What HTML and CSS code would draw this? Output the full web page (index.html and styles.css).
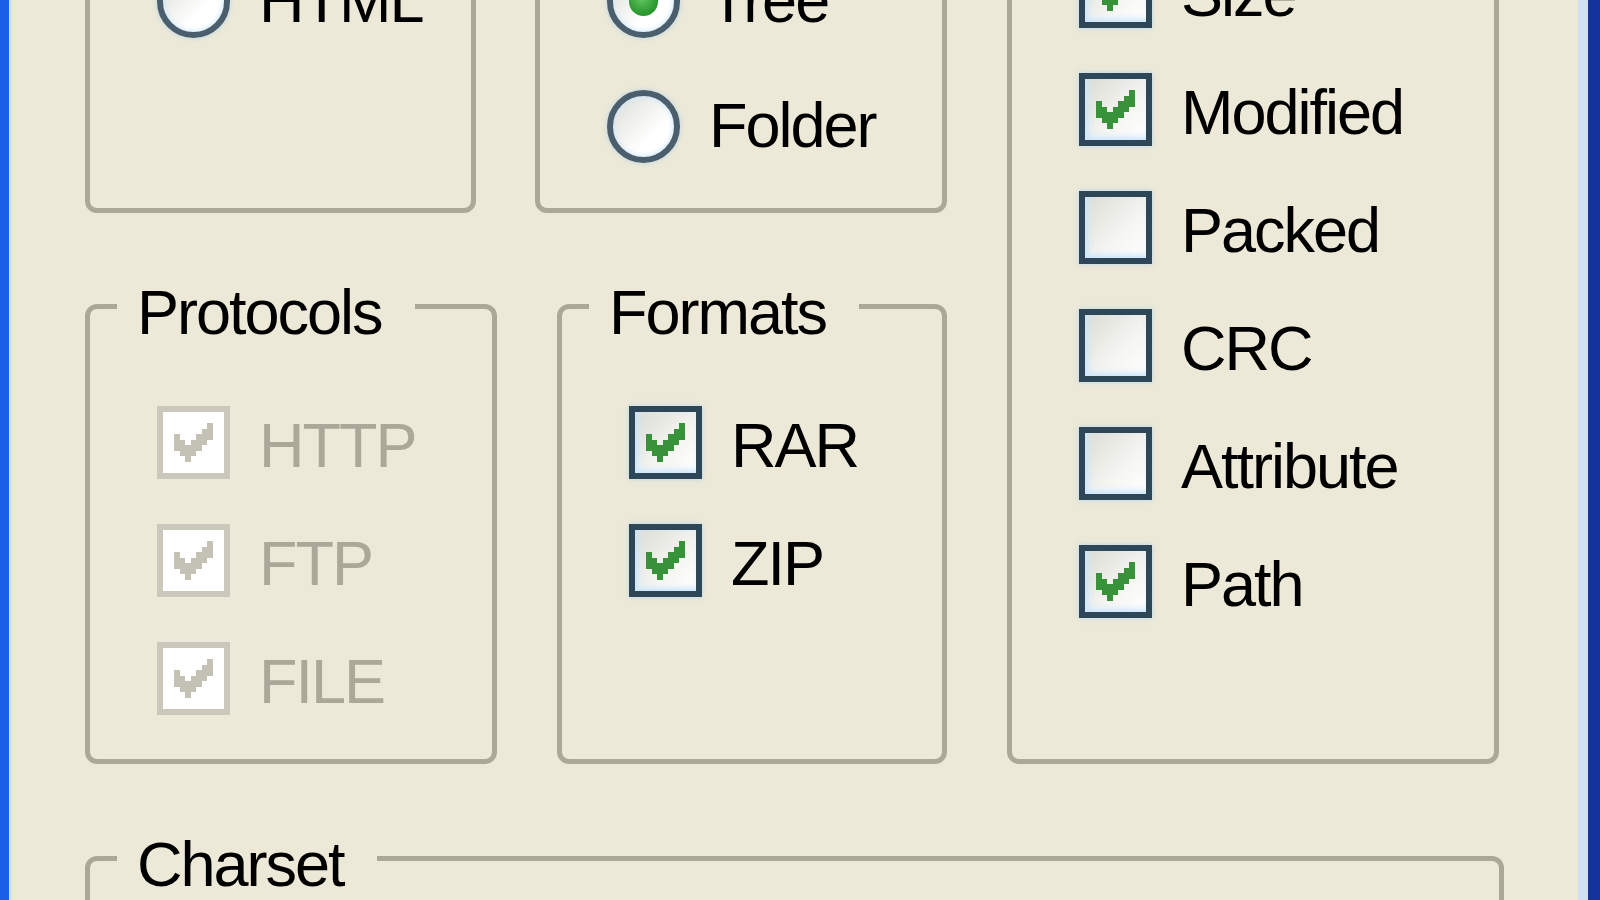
FILE: index.html
```html
<!DOCTYPE html>
<html lang="en">
<head>
    <meta charset="UTF-8">
    <title>Options</title>
    <link rel="stylesheet" href="styles.css">
</head>
<body>
    <div class="window">
        <div class="main">
            <div class="left-col">
                <div class="row">
                    <fieldset class="group g-output">
                        <div class="opts">
                            <div class="opt radio-opt"><span class="radio"></span><label>HTML</label></div>
                        </div>
                    </fieldset>
                    <fieldset class="group g-view">
                        <div class="opts">
                            <div class="opt radio-opt"><span class="radio on"></span><label>Tree</label></div>
                            <div class="opt radio-opt"><span class="radio"></span><label>Folder</label></div>
                        </div>
                    </fieldset>
                </div>
                <div class="row row-bottom">
                    <fieldset class="group g-protocols">
                        <legend>Protocols</legend>
                        <div class="opts">
                            <div class="opt disabled"><span class="check"><svg viewBox="1 1 11 11" shape-rendering="crispEdges"><path d="M9 3h1v1h-1z M8 4h2v1h-2z M3 5h1v1h-1z M7 5h3v1h-3z M3 6h2v1h-2z M6 6h3v1h-3z M3 7h5v1h-5z M4 8h3v1h-3z M5 9h1v1h-1z"/></svg></span><label>HTTP</label></div>
                            <div class="opt disabled"><span class="check"><svg viewBox="1 1 11 11" shape-rendering="crispEdges"><path d="M9 3h1v1h-1z M8 4h2v1h-2z M3 5h1v1h-1z M7 5h3v1h-3z M3 6h2v1h-2z M6 6h3v1h-3z M3 7h5v1h-5z M4 8h3v1h-3z M5 9h1v1h-1z"/></svg></span><label>FTP</label></div>
                            <div class="opt disabled"><span class="check"><svg viewBox="1 1 11 11" shape-rendering="crispEdges"><path d="M9 3h1v1h-1z M8 4h2v1h-2z M3 5h1v1h-1z M7 5h3v1h-3z M3 6h2v1h-2z M6 6h3v1h-3z M3 7h5v1h-5z M4 8h3v1h-3z M5 9h1v1h-1z"/></svg></span><label>FILE</label></div>
                        </div>
                    </fieldset>
                    <fieldset class="group g-formats">
                        <legend>Formats</legend>
                        <div class="opts">
                            <div class="opt"><span class="check"><svg viewBox="1 1 11 11" shape-rendering="crispEdges"><path d="M9 3h1v1h-1z M8 4h2v1h-2z M3 5h1v1h-1z M7 5h3v1h-3z M3 6h2v1h-2z M6 6h3v1h-3z M3 7h5v1h-5z M4 8h3v1h-3z M5 9h1v1h-1z"/></svg></span><label>RAR</label></div>
                            <div class="opt"><span class="check"><svg viewBox="1 1 11 11" shape-rendering="crispEdges"><path d="M9 3h1v1h-1z M8 4h2v1h-2z M3 5h1v1h-1z M7 5h3v1h-3z M3 6h2v1h-2z M6 6h3v1h-3z M3 7h5v1h-5z M4 8h3v1h-3z M5 9h1v1h-1z"/></svg></span><label>ZIP</label></div>
                        </div>
                    </fieldset>
                </div>
            </div>
            <fieldset class="group g-columns">
                <div class="opts">
                    <div class="opt"><span class="check"><svg viewBox="1 1 11 11" shape-rendering="crispEdges"><path d="M9 3h1v1h-1z M8 4h2v1h-2z M3 5h1v1h-1z M7 5h3v1h-3z M3 6h2v1h-2z M6 6h3v1h-3z M3 7h5v1h-5z M4 8h3v1h-3z M5 9h1v1h-1z"/></svg></span><label>Size</label></div>
                    <div class="opt"><span class="check"><svg viewBox="1 1 11 11" shape-rendering="crispEdges"><path d="M9 3h1v1h-1z M8 4h2v1h-2z M3 5h1v1h-1z M7 5h3v1h-3z M3 6h2v1h-2z M6 6h3v1h-3z M3 7h5v1h-5z M4 8h3v1h-3z M5 9h1v1h-1z"/></svg></span><label>Modified</label></div>
                    <div class="opt"><span class="check"></span><label>Packed</label></div>
                    <div class="opt"><span class="check"></span><label>CRC</label></div>
                    <div class="opt"><span class="check"></span><label>Attribute</label></div>
                    <div class="opt"><span class="check"><svg viewBox="1 1 11 11" shape-rendering="crispEdges"><path d="M9 3h1v1h-1z M8 4h2v1h-2z M3 5h1v1h-1z M7 5h3v1h-3z M3 6h2v1h-2z M6 6h3v1h-3z M3 7h5v1h-5z M4 8h3v1h-3z M5 9h1v1h-1z"/></svg></span><label>Path</label></div>
                </div>
            </fieldset>
        </div>
        <fieldset class="group g-charset">
            <legend>Charset</legend>
        </fieldset>
    </div>
</body>
</html>
```

FILE: styles.css
```css
body {
    margin: 0;
    font-family: 'Liberation Sans', Arial, sans-serif;
}
.window {
    display: flex;
    flex-direction: column;
    height: 900px;
    overflow: hidden;
    box-sizing: border-box;
    background-color: #ece9d8;
    border-left: 9px solid #1b5fe6;
    border-right: 12px solid #14339f;
    padding-left: 76px;
    box-shadow: inset 3px 0 0 #cfe2fa, inset -10px 0 0 #d2e0f6;
    font-size: 63px;
    letter-spacing: -2px;
    color: #000;
}
.main {
    display: flex;
    margin-top: -100px; /* 上面几组只露出下半部分 */
    flex: none;
}
.left-col {
    width: 862px;
    flex: none;
    display: flex;
    flex-direction: column;
}
.row {
    display: flex;
}
.row-bottom {
    margin-top: 51px;
}
.group {
    margin: 0;
    padding: 0;
    min-width: 0;
    box-sizing: border-box;
    border: 5px solid #aca899;
    border-radius: 12px;
}
.group legend {
    margin-left: 27px;
    padding: 12px 33px 0 20px;
    line-height: 72px;
}
.opts {
    padding-left: 67px;
}
.g-output {
    width: 391px;
    margin-right: 59px;
    padding-top: 60px;
}
.g-view {
    width: 412px;
    padding: 60px 0 45px;
}
.g-protocols {
    width: 412px;
    margin-right: 60px;
    padding: 58px 0 44px;
}
.g-formats {
    width: 390px;
    padding-top: 58px;
}
.g-columns {
    width: 492px;
    margin-left: 60px;
    padding-top: 50px;
}
.g-charset {
    width: 1419px;
    height: 200px;
    flex: none;
    margin-top: 52px;
}
.opt {
    display: flex;
    align-items: flex-start;
    height: 73px;
}
.opt + .opt {
    margin-top: 45px;
}
.radio-opt + .radio-opt {
    margin-top: 52px;
}
.opt label {
    margin-left: 29px;
    line-height: 78px;
    white-space: nowrap;
}
.radio-opt label {
    line-height: 70px;
}
.check {
    flex: none;
    width: 73px;
    height: 73px;
    box-sizing: border-box;
    border: 6px solid #2d4658;
    background: linear-gradient(135deg, #dcdcd5, #f5f5f2 60%, #fff);
    box-shadow: inset 6px 0 6px -3px #cbe6fc, inset 0 -6px 6px -3px #cbe6fc, 0 0 5px rgba(150, 200, 240, 0.6);
}
.check svg {
    display: block;
    width: 61px;
    height: 61px;
}
.check path {
    fill: #37923a;
}
.disabled .check {
    border-color: #cac8bb;
    background: #fff;
    box-shadow: none;
}
.disabled .check path {
    fill: #c4c2b4;
}
.disabled label {
    color: #aca899;
}
.radio {
    flex: none;
    width: 73px;
    height: 73px;
    box-sizing: border-box;
    border-radius: 50%;
    border: 6px solid #4a5e6e;
    background: linear-gradient(135deg, #dcdcd5, #fff 65%);
    box-shadow: inset 0 0 5px 1px #cfe8fc, 0 0 5px rgba(150, 200, 240, 0.6);
    display: flex;
    align-items: center;
    justify-content: center;
}
.radio.on::after {
    content: "";
    width: 29px;
    height: 29px;
    border-radius: 50%;
    background: radial-gradient(circle at 45% 40%, #62c862, #2f9a32 60%, #2a8a2c);
}
```
